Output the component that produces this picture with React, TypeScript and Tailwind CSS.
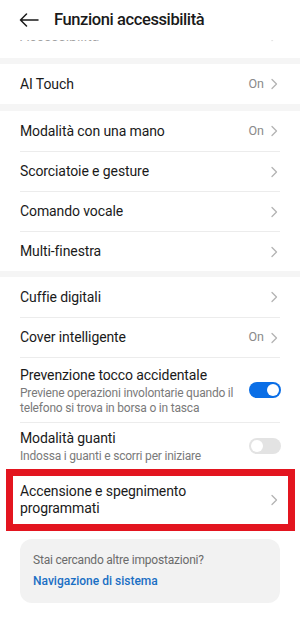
import React from "react";

const Chevron = () => (
  <svg width="8" height="12" viewBox="0 0 8 12" className="shrink-0">
    <path d="M2 1.5 L6.5 6 L2 10.5" fill="none" stroke="#b3b3b3" strokeWidth="1.3" strokeLinecap="round" strokeLinejoin="round" />
  </svg>
);

const Divider = () => <div className="mx-[20px] h-px bg-[#ececec]" />;

const Row = ({ label, on, h = "h-[40px]" }: { label: string; on?: boolean; h?: string }) => (
  <div className={`flex items-center justify-between pl-[20px] pr-[22px] ${h}`}>
    <span className="text-[14px] tracking-[-0.1px] text-[#1a1a1a]">{label}</span>
    <div className="flex items-center gap-[6px]">
      {on && <span className="text-[12.5px] text-[#8a8a8a]">On</span>}
      <Chevron />
    </div>
  </div>
);

const Toggle = ({ on }: { on: boolean }) => (
  <div
    className={`flex h-[16px] w-[32px] shrink-0 items-center rounded-full px-[2px] ${
      on ? "justify-end bg-[#0a6ee6]" : "justify-start bg-[#e3e3e3]"
    }`}
  >
    <div className="h-[12px] w-[12px] rounded-full bg-white" />
  </div>
);

export default function App() {
  return (
    <div className="relative h-[624px] w-[300px] overflow-hidden bg-white font-['Roboto',sans-serif]">
      {/* Header */}
      <div className="flex h-[40px] items-center">
        <svg width="20" height="14" viewBox="0 0 20 14" className="ml-[19px] shrink-0">
          <path d="M1.5 7 H19 M7.5 1 L1.5 7 L7.5 13" fill="none" stroke="#1a1a1a" strokeWidth="1.5" strokeLinecap="round" strokeLinejoin="round" />
        </svg>
        <span className="ml-[15px] text-[16.5px] font-medium tracking-[-0.4px] text-[#1a1a1a]">Funzioni accessibilità</span>
      </div>

      {/* Scrolled remnant */}
      <div className="h-[18px] overflow-hidden">
        <div className="mt-[-14px] flex h-[20px] items-center justify-between pl-[20px] pr-[22px] opacity-40">
          <span className="text-[14px] leading-[20px] text-[#1a1a1a]">Accessibilità</span>
          <Chevron />
        </div>
      </div>
      <div className="h-[6px] bg-[#f5f5f5]" />

      <Row label="AI Touch" on h="h-[40px]" />
      <div className="h-[7px] bg-[#f5f5f5]" />

      <Row label="Modalità con una mano" on />
      <Divider />
      <Row label="Scorciatoie e gesture" h="h-[39px]" />
      <Divider />
      <Row label="Comando vocale" h="h-[39px]" />
      <Divider />
      <Row label="Multi-finestra" h="h-[39px]" />
      <div className="h-[6px] bg-[#f5f5f5]" />

      <Row label="Cuffie digitali" />
      <Divider />
      <Row label="Cover intelligente" on h="h-[39px]" />
      <Divider />

      {/* Prevenzione */}
      <div className="flex h-[64px] items-center justify-between pl-[20px] pr-[19px]">
        <div className="flex flex-col">
          <span className="text-[14px] leading-[20px] tracking-[-0.1px] text-[#1a1a1a]">Prevenzione tocco accidentale</span>
          <span className="mt-[1px] w-[228px] text-[12px] leading-[15px] tracking-[-0.2px] text-[#7a7a7a]">
            Previene operazioni involontarie quando il telefono si trova in borsa o in tasca
          </span>
        </div>
        <Toggle on />
      </div>
      <Divider />

      {/* Guanti */}
      <div className="flex h-[46px] items-center justify-between pl-[20px] pr-[19px]">
        <div className="flex flex-col">
          <span className="text-[14px] leading-[20px] tracking-[-0.1px] text-[#1a1a1a]">Modalità guanti</span>
          <span className="text-[12px] leading-[16px] tracking-[-0.2px] text-[#7a7a7a]">Indossa i guanti e scorri per iniziare</span>
        </div>
        <Toggle on={false} />
      </div>

      {/* Accensione with red annotation box */}
      <div className="relative flex h-[62px] items-center justify-between pl-[20px] pr-[22px]">
        <span className="w-[200px] text-[14px] leading-[17px] tracking-[-0.1px] text-[#1a1a1a]">Accensione e spegnimento programmati</span>
        <Chevron />
        <div className="pointer-events-none absolute bottom-0 left-[6px] right-[5px] top-0 border-[7px] border-[#e3151f]" />
      </div>

      {/* Card */}
      <div className="mx-[20px] mt-[8px] flex h-[64px] flex-col justify-center rounded-[12px] bg-[#f2f2f2] px-[13px]">
        <span className="text-[12px] leading-[21px] tracking-[-0.2px] text-[#6b6b6b]">Stai cercando altre impostazioni?</span>
        <span className="text-[12px] font-medium leading-[21px] text-[#1a6fc4]">Navigazione di sistema</span>
      </div>
    </div>
  );
}
